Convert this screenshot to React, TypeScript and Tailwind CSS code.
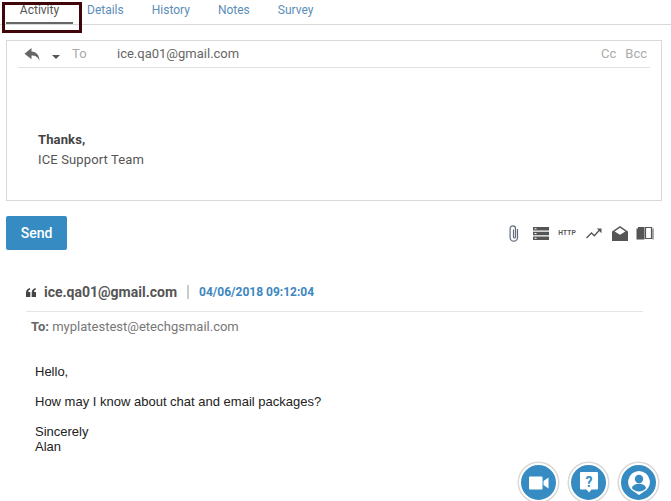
import React from 'react';

const tabs = ['Details', 'History', 'Notes', 'Survey'];

const ReplyIcon = () => (
  <svg width="17" height="15" viewBox="0 0 17 15" className="block">
    <path d="M7.500 1 0.500 6.800 7.500 12.200V8.600c3.600 0 6 1 8 5.200 0-5.400-2.800-9.200-8-9.400z" fill="#666" />
  </svg>
);

const QuoteIcon = () => (
  <svg width="10" height="9" viewBox="0 0 10 9" className="block" fill="#444">
    <path d="M0 9V5C0 2.200 1.300.6 4 0v1.800C2.800 2.200 2.300 2.900 2.300 4H4.300V9zM5.700 9V5C5.700 2.200 7 .6 9.700 0v1.800C8.500 2.200 8 2.900 8 4H10V9z" />
  </svg>
);

const ClipIcon = () => (
  <svg width="12" height="17" viewBox="0 0 12 17" fill="none" className="block">
    <path d="M9.500 4v8.500a3.700 3.700 0 0 1-7.400 0V3.500a2.700 2.700 0 0 1 5.400 0V12a1 1 0 0 1-2 0V4.500" stroke="#5f6b7a" strokeWidth="1.200" />
  </svg>
);

const ListIcon = () => (
  <svg width="16" height="13" viewBox="0 0 16 13" className="block" fill="#555">
    <path d="M0 0h16v3.500H0zM0 4.750h16v3.500H0zM0 9.500h16V13H0z" />
    <path d="M1.500 1.300h2v1h-2zM1.500 6h2v1h-2zM1.500 10.800h2v1h-2z" fill="#fff" />
  </svg>
);

const TrendIcon = () => (
  <svg width="16" height="11" viewBox="0 0 16 11" fill="none" className="block">
    <path d="M0.500 10 5.500 5l2.800 2.800 5.500-6" stroke="#555" strokeWidth="1.300" />
    <path d="M10.800 0.500H15.500V5.200z" fill="#555" />
  </svg>
);

const OpenMailIcon = () => (
  <svg width="16" height="15" viewBox="0 0 16 15" className="block">
    <path d="M8 0 16 5.500V15H0V5.500z" fill="#555" />
    <path d="M8 1.800 13.400 5.500 8 8.800 2.600 5.500z" fill="#fff" />
  </svg>
);

const BookIcon = () => (
  <svg width="18" height="14" viewBox="0 0 18 14" className="block">
    <path d="M0.500 2.500H2V1h6.500v12.500H0.500z" fill="#555" />
    <path d="M9.500 1.500h6v11h-6z" fill="#fff" stroke="#555" strokeWidth="1.200" />
    <path d="M17 2.500v11" stroke="#555" />
  </svg>
);

const VideoIcon = () => (
  <svg width="20" height="14" viewBox="0 0 20 14" className="block">
    <path d="M0 1.500A1 1 0 0 1 1 .5h11.500a1 1 0 0 1 1 1v11a1 1 0 0 1-1 1H1a1 1 0 0 1-1-1z" fill="#fff" />
    <path d="M14.500 5 19.500 1.500v11L14.500 9z" fill="#fff" />
  </svg>
);

const HelpIcon = () => (
  <svg width="18" height="21" viewBox="0 0 18 21" className="block">
    <path d="M1 0h16a1 1 0 0 1 1 1v15.500a1 1 0 0 1-1 1h-5.500L9 20.500l-2.500-3H1a1 1 0 0 1-1-1V1a1 1 0 0 1 1-1z" fill="#fff" />
    <text x="9" y="14.500" textAnchor="middle" fontSize="14" fontWeight="700" fill="#368cc2" fontFamily="Roboto, sans-serif">?</text>
  </svg>
);

const ContactIcon = () => (
  <svg width="22" height="24" viewBox="0 0 22 24" className="block">
    <path d="M11 0a11 11 0 0 1 4 21.200L11 24l-4-2.800A11 11 0 0 1 11 0z" fill="#fff" />
    <circle cx="11" cy="8" r="4.200" fill="#368cc2" />
    <path d="M3.800 17c1-3 4-4.200 7.200-4.200s6.200 1.200 7.200 4.200c-1.600 2.300-4.200 3.500-7.200 3.500S5.400 19.300 3.800 17z" fill="#368cc2" />
  </svg>
);

const RoundButton = ({ children }: { children: React.ReactNode }) => (
  <div className="flex h-[39px] w-[39px] items-center justify-center rounded-full border-2 border-white bg-[#368cc2] shadow-[0_0_0_1.5px_#d8d8d8]">
    {children}
  </div>
);

export default function App() {
  return (
    <div className="relative h-[501px] w-[671px] overflow-hidden bg-white font-['Roboto',sans-serif] text-[#555]">
      {/* tabs */}
      <div className="mb-[15px] flex h-[25px] items-start border-b border-[#d9d9d9] pl-[6px] text-[12px]">
        <div className="relative h-[24px] w-[67px] border-b-2 border-[#666] text-center leading-[20px] text-[#555]">
          Activity
          <div className="absolute left-[-4px] top-[2px] h-[31px] w-[80px] border-[3px] border-[#3f0509]" />
        </div>
        <div className="ml-[14px] flex gap-[28px] leading-[20px] text-[#5b8db8]">
          {tabs.map((t) => (
            <span key={t}>{t}</span>
          ))}
        </div>
      </div>

      {/* composer */}
      <div className="mx-[6px] h-[161px] w-[656px] border border-[#d9d9d9] px-[11px]">
        <div className="flex h-[27px] items-center border-b border-[#e0e0e0] text-[13px]">
          <div className="ml-[6px] w-[17px]">
            <ReplyIcon />
          </div>
          <div className="ml-[11px] mt-[6px] h-0 w-0 border-x-[4px] border-t-[4px] border-x-transparent border-t-[#555]" />
          <span className="ml-[12px] w-[45px] text-[#aaa]">To</span>
          <span className="text-[#666]">ice.qa01@gmail.com</span>
          <span className="ml-auto text-[#aaa]">Cc</span>
          <span className="ml-[9px] mr-[3px] text-[#aaa]">Bcc</span>
        </div>
        <div className="ml-[20px] mt-[62px] text-[13px] leading-[20px] tracking-[0.13px]">
          <div className="font-bold text-[#444]">Thanks,</div>
          <div className="text-[#555]">ICE Support Team</div>
        </div>
      </div>

      {/* send + tools */}
      <div className="mx-[6px] mt-[15px] flex h-[34px] w-[648px] items-center">
        <button className="h-[34px] w-[61px] rounded-[2px] bg-[#368cc2] text-[14px] font-medium text-white">Send</button>
        <div className="ml-auto flex items-center">
          <ClipIcon />
          <div className="ml-[13px]"><ListIcon /></div>
          <span className="ml-[9px] font-['Liberation_Sans',sans-serif] text-[6.5px] font-bold tracking-[0.2px] text-[#555]">HTTP</span>
          <div className="ml-[10px]"><TrendIcon /></div>
          <div className="ml-[10px]"><OpenMailIcon /></div>
          <div className="ml-[8px]"><BookIcon /></div>
        </div>
      </div>

      {/* message */}
      <div className="ml-[26px] mt-[33px] w-[617px]">
        <div className="flex h-[29px] items-start border-b border-[#e5e5e5]">
          <div className="mt-[5px] w-[18px]"><QuoteIcon /></div>
          <span className="text-[14px] font-bold leading-[18px] text-[#555]">ice.qa01@gmail.com</span>
          <span className="ml-[10px] mt-[2px] h-[14px] w-[2px] bg-[#ccc]" />
          <span className="ml-[10px] text-[12px] font-bold leading-[18px] text-[#3d87c0]">04/06/2018 09:12:04</span>
        </div>
        <div className="ml-[5px] mt-[6px] text-[13px] leading-[18px] text-[#777]">
          <span className="font-bold text-[#666]">To:</span> myplatestest@etechgsmail.com
        </div>
      </div>

      <div className="ml-[35px] mt-[28px] font-['Liberation_Sans',sans-serif] text-[13px] leading-[15px] text-[#222]">
        <div>Hello,</div>
        <div className="mt-[15px]">How may I know about chat and email packages?</div>
        <div className="mt-[15px]">Sincerely</div>
        <div>Alan</div>
      </div>

      {/* floating actions */}
      <div className="absolute left-[519px] top-[463px] flex gap-[11px]">
        <RoundButton><VideoIcon /></RoundButton>
        <RoundButton><HelpIcon /></RoundButton>
        <RoundButton><ContactIcon /></RoundButton>
      </div>
    </div>
  );
}
